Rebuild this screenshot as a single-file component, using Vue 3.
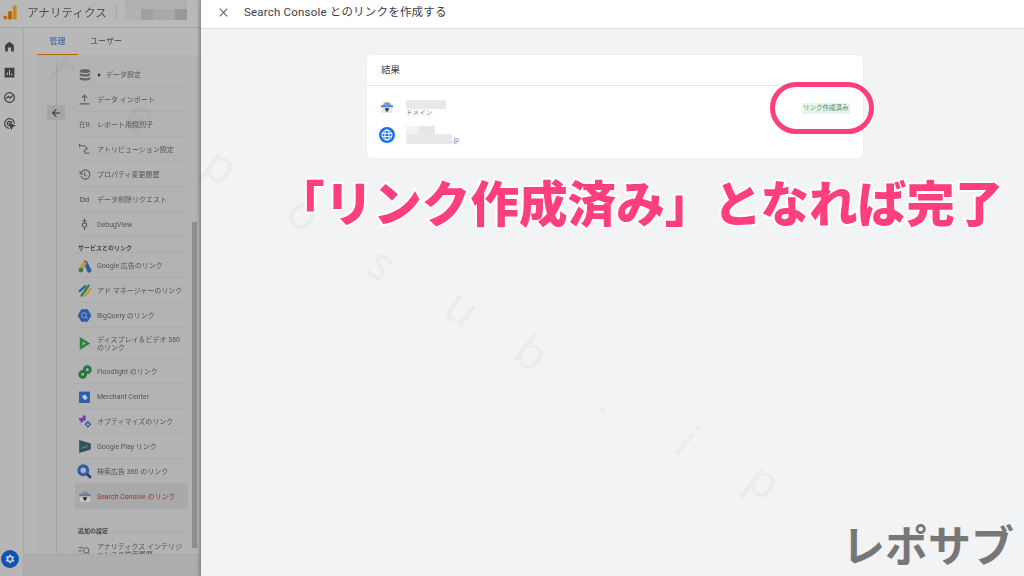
<script setup>
const topItems = [
  { id: 'data', label: 'データ設定', caret: true },
  { id: 'import', label: 'データ インポート' },
  { id: 'report', label: 'レポート用識別子' },
  { id: 'attr', label: 'アトリビューション設定' },
  { id: 'history', label: 'プロパティ変更履歴' },
  { id: 'delete', label: 'データ削除リクエスト' },
  { id: 'debug', label: 'DebugView' }
]

const linkItems = [
  { id: 'ads', label: 'Google 広告のリンク' },
  { id: 'manager', label: 'アド マネージャーのリンク' },
  { id: 'bigquery', label: 'BigQuery のリンク' },
  { id: 'display', label: 'ディスプレイ＆ビデオ 360 のリンク', tall: true },
  { id: 'floodlight', label: 'Floodlight のリンク' },
  { id: 'merchant', label: 'Merchant Center' },
  { id: 'optimize', label: 'オプティマイズのリンク' },
  { id: 'play', label: 'Google Play リンク' },
  { id: 'sa360', label: '検索広告 360 のリンク' },
  { id: 'console', label: 'Search Console のリンク', active: true }
]

const watermark = [
  { ch: 'r', x: 64, y: 68 },
  { ch: 'e', x: 142, y: 115 },
  { ch: 'p', x: 222, y: 165 },
  { ch: 'o', x: 305, y: 212 },
  { ch: 's', x: 383, y: 263 },
  { ch: 'u', x: 463, y: 307 },
  { ch: 'b', x: 532, y: 352 },
  { ch: '.', x: 612, y: 398 },
  { ch: 'i', x: 688, y: 440 },
  { ch: 'p', x: 765, y: 480 }
]
</script>

<template>
  <div class="screen">
    <aside class="ga">
      <header class="ga-head">
        <svg class="logo" viewBox="0 0 18 18" width="18" height="18">
          <rect x="12.5" y="0" width="5" height="18" rx="1.5" fill="#c98a12" />
          <rect x="6.5" y="7" width="5" height="11" rx="1.5" fill="#b5650f" />
          <circle cx="3" cy="15.5" r="2.5" fill="#b5650f" />
        </svg>
        <span class="ga-title">アナリティクス</span>
        <span class="ga-sep"></span>
        <span class="ga-account">
          <i class="mask-top"></i>
          <i class="mask-bottom"></i>
        </span>
      </header>

      <div class="ga-body">
        <nav class="rail">
          <svg viewBox="0 0 24 24" width="13" height="13"><path d="M12 3 4 9v12h5v-7h6v7h5V9z" fill="#3d4043" /></svg>
          <svg viewBox="0 0 24 24" width="13" height="13"><path d="M3 3h18v18H3zM7 12v5h2v-5zm4-5v10h2V7zm4 7v3h2v-3z" fill="#3d4043" fill-rule="evenodd" /></svg>
          <svg viewBox="0 0 24 24" width="13" height="13" fill="none" stroke="#3d4043" stroke-width="2.2"><circle cx="12" cy="12" r="9" /><path d="m6 14 4-4 3 3 5-5" /></svg>
          <svg viewBox="0 0 24 24" width="13" height="13" fill="none" stroke="#3d4043" stroke-width="2.2"><path d="M21 12a9 9 0 1 0-9 9" /><path d="M16 12a4 4 0 1 0-4 4" /><path d="m12 12 9 4-4 1.500-1.500 4z" fill="#3d4043" /></svg>
        </nav>

        <main class="admin">
          <div class="tabs">
            <span class="tab tab-on">管理</span>
            <span class="tab">ユーザー</span>
          </div>
          <div class="columns">
            <div class="gutter">
              <button class="back" type="button">
                <svg viewBox="0 0 24 24" width="12" height="12"><path d="M20 11H7.800l5.600-5.600L12 4l-8 8 8 8 1.400-1.400L7.800 13H20z" fill="#2f3133" /></svg>
              </button>
            </div>
            <div class="list">
              <div v-for="item in topItems" :key="item.id" class="row">
                <span class="row-icon">
                  <svg v-if="item.id === 'data'" viewBox="0 0 24 24" width="14" height="14" fill="#666"><ellipse cx="12" cy="5" rx="9" ry="3.500" /><path d="M3 8c2 3.500 16 3.500 18 0v4c-2 3.500-16 3.500-18 0zM3 15c2 3.500 16 3.500 18 0v4c-2 3.500-16 3.500-18 0z" /></svg>
                  <svg v-else-if="item.id === 'import'" viewBox="0 0 24 24" width="13" height="13" fill="none" stroke="#5c5c5c" stroke-width="2"><path d="M12 16V4M7 9l5-5 5 5M3 20h18" /></svg>
                  <span v-else-if="item.id === 'report'" class="glyph-small">在B</span>
                  <svg v-else-if="item.id === 'attr'" viewBox="0 0 24 24" width="13" height="13" fill="none" stroke="#5c5c5c" stroke-width="2"><path d="M3 5h9l5 5-6 5 3 4h7" /><path d="M3 2v6" /></svg>
                  <svg v-else-if="item.id === 'history'" viewBox="0 0 24 24" width="13" height="13" fill="none" stroke="#5c5c5c" stroke-width="2"><path d="M4 6v5h5" /><path d="M5 11a8.500 8.500 0 1 1 .5 4" /><path d="M12 8v5l3 2" /></svg>
                  <span v-else-if="item.id === 'delete'" class="glyph-dd">Dd</span>
                  <svg v-else viewBox="0 0 24 24" width="13" height="15" fill="none" stroke="#5c5c5c" stroke-width="2"><circle cx="12" cy="13" r="4" /><path d="M12 1v8M12 17v6M8 5h8" /></svg>
                </span>
                <span v-if="item.caret" class="caret"></span>
                <span class="row-label">{{ item.label }}</span>
              </div>

              <div class="section">サービスとのリンク</div>

              <div
                v-for="item in linkItems"
                :key="item.id"
                class="row"
                :class="{ 'row-tall': item.tall, 'row-active': item.active }"
              >
                <span class="row-icon">
                  <svg v-if="item.id === 'ads'" viewBox="0 0 24 24" width="14" height="14"><path d="M9 3h6l8 16a4 4 0 0 1-7 3z" fill="#2e5ea8" /><path d="M9 3 2 17l6 4 7-14z" fill="#c5982a" /><circle cx="5" cy="19" r="4" fill="#2c8344" /></svg>
                  <svg v-else-if="item.id === 'manager'" viewBox="0 0 24 24" width="14" height="14" fill="none" stroke-width="4" stroke-linecap="round"><path d="M3 12 12 4" stroke="#2e5ea8" /><path d="M6 20 18 3" stroke="#2c8344" /><path d="M12 20 21 9" stroke="#c5982a" /></svg>
                  <svg v-else-if="item.id === 'bigquery'" viewBox="0 0 24 24" width="15" height="15"><path d="M7 2h10l6 10-6 10H7L1 12z" fill="#2e5ea8" /><circle cx="11.500" cy="11.500" r="4" fill="none" stroke="#8aa4cc" stroke-width="1.500" /><path d="m14 14 3 3" stroke="#8aa4cc" stroke-width="1.500" /></svg>
                  <svg v-else-if="item.id === 'display'" viewBox="0 0 24 24" width="14" height="15"><path d="M3 1v22l18-11z" fill="#2c8344" /><path d="M8 9v6l5-3z" fill="#b5b5b5" /></svg>
                  <svg v-else-if="item.id === 'floodlight'" viewBox="0 0 24 24" width="14" height="14" fill="none" stroke="#23793d" stroke-width="5"><circle cx="16" cy="8" r="5" /><circle cx="8" cy="16" r="5" /></svg>
                  <svg v-else-if="item.id === 'merchant'" viewBox="0 0 24 24" width="13" height="14"><path d="M2 2h20v21H2z" fill="#2e5ea8" /><path d="m8 9 6-1 4 6-5 4-5-5z" fill="#b9c8e0" /></svg>
                  <svg v-else-if="item.id === 'optimize'" viewBox="0 0 24 24" width="14" height="14"><path d="M2 5h6V1h5v9H8v3H4V9H2z" fill="#7c3aa8" /><path d="m17 10 6 6-6 6-6-6z" fill="#2e5ea8" /><circle cx="17" cy="16" r="2" fill="#b5b5b5" /></svg>
                  <svg v-else-if="item.id === 'play'" viewBox="0 0 24 24" width="14" height="15"><path d="M2 1 22 7v10L2 23z" fill="#33505a" /><path d="m6 16 4-4 3 2 4-5" fill="none" stroke="#7f9aa3" stroke-width="1.500" /></svg>
                  <svg v-else-if="item.id === 'sa360'" viewBox="0 0 24 24" width="15" height="15" fill="none"><circle cx="10" cy="10" r="7" stroke="#2e5ea8" stroke-width="5" /><path d="m16 16 6 6" stroke="#1d3f78" stroke-width="4" /></svg>
                  <svg v-else viewBox="0 0 24 24" width="14" height="15"><path d="M5 9c0-8 14-8 14 0z" fill="#8c8c8c" /><path d="M2 8h20v4H2z" fill="#5f7dad" /><path d="M3 12h18v9H3z" fill="#c9c9c9" /><path d="M9 13h6v3l-3 4-3-4z" fill="#333" /></svg>
                </span>
                <span class="row-label">{{ item.label }}</span>
              </div>

              <div class="section section-extra">追加の設定</div>

              <div class="row row-last">
                <span class="row-icon">
                  <svg viewBox="0 0 24 24" width="15" height="13" fill="none" stroke="#5c5c5c" stroke-width="1.800"><path d="M1 5h8M1 11h6M1 17h8" /><circle cx="15" cy="10" r="5" /><path d="m19 14 4 5" /></svg>
                </span>
                <span class="row-label">アナリティクス インテリジェンスの検索履歴</span>
              </div>
            </div>
            <div class="scroll-track"><span class="scroll-thumb"></span></div>
          </div>
          <div class="admin-foot"></div>
        </main>
      </div>

      <span class="gear">
        <svg viewBox="0 0 24 24" width="12" height="12"><path fill="#c8cdd6" fill-rule="evenodd" d="M19.400 13a7.500 7.500 0 0 0 0-2l2.100-1.600-2-3.500-2.500 1a7.500 7.500 0 0 0-1.700-1L15.400 3.300h-4l-.4 2.600a7.500 7.500 0 0 0-1.700 1l-2.500-1-2 3.500L6.900 11a7.500 7.500 0 0 0 0 2l-2.100 1.600 2 3.500 2.500-1a7.500 7.500 0 0 0 1.700 1l.4 2.600h4l.4-2.600a7.500 7.500 0 0 0 1.700-1l2.500 1 2-3.500zM13.400 15.500a3.500 3.500 0 1 1 0-7 3.500 3.500 0 0 1 0 7z" transform="translate(-1.200 0)" /></svg>
      </span>
    </aside>

    <section class="panel">
      <header class="panel-head">
        <svg viewBox="0 0 24 24" width="13" height="13"><path d="M5 5l14 14M19 5 5 19" stroke="#5f6368" stroke-width="2" fill="none" /></svg>
        <h1>Search Console とのリンクを作成する</h1>
      </header>

      <div class="panel-body">
        <div class="card">
          <div class="card-title">結果</div>
          <div class="card-rows">
            <div class="result">
              <svg class="console-icon" viewBox="0 0 24 24" width="14" height="15"><path d="M5 8c0-7 14-7 14 0z" fill="#9aa0a6" /><path d="M2 8h20v4H2z" fill="#4285f4" /><path d="M3 12h18v9H3z" fill="#e3e5e8" /><path d="M9 13h6v3l-3 4-3-4z" fill="#3c4043" /></svg>
              <div class="result-text">
                <span class="mask mask-domain"></span>
                <span class="result-sub">ドメイン</span>
              </div>
              <span class="badge">リンク作成済み</span>
            </div>
            <div class="result result-site">
              <svg viewBox="0 0 24 24" width="16" height="16">
                <circle cx="12" cy="12" r="12" fill="#1a73e8" />
                <g fill="none" stroke="#fff" stroke-width="1.500">
                  <circle cx="12" cy="12" r="7.500" />
                  <ellipse cx="12" cy="12" rx="3.200" ry="7.500" />
                  <path d="M4.500 9.500h15M4.500 14.500h15" />
                </g>
              </svg>
              <div class="result-text site-text">
                <span class="mask mask-site-top"></span>
                <span class="site-line"><span class="mask mask-site"></span><span class="tld">.jp</span></span>
              </div>
            </div>
          </div>
        </div>
      </div>
    </section>

    <div class="watermark">
      <span
        v-for="(m, i) in watermark"
        :key="i"
        class="mark"
        :style="{ left: m.x + 'px', top: m.y + 'px' }"
      >{{ m.ch }}</span>
    </div>

    <span class="ring"></span>
    <div class="caption">「リンク作成済み」となれば完了</div>
    <div class="brand">レポサブ</div>
  </div>
</template>

<style>
html, body {
  margin: 0;
  background: #f1f3f5;
}
</style>

<style scoped>
.screen {
  position: relative;
  display: flex;
  width: 1024px;
  height: 576px;
  overflow: hidden;
  font-family: Roboto, "Noto Sans CJK JP", sans-serif;
  color: #3c3c3c;
}

/* dimmed page behind the side sheet */
.ga {
  position: relative;
  flex: 0 0 201px;
  display: flex;
  flex-direction: column;
  height: 576px;
  background: #b6b6b6;
  overflow: hidden;
  filter: blur(0.35px);
}
.ga-head {
  flex: 0 0 28px;
  display: flex;
  align-items: center;
  padding: 0 0 3px 3px;
  background: #b9b9b9;
  border-bottom: 1px solid #a8a8a8;
  box-sizing: border-box;
  overflow: hidden;
}
.logo {
  flex: none;
  width: 14px;
  height: 15px;
}
.ga-title {
  margin-left: 10px;
  font-size: 11.500px;
  letter-spacing: 0.100px;
  white-space: nowrap;
  color: #505050;
}
.ga-sep {
  flex: none;
  width: 1px;
  height: 17px;
  margin-left: 9px;
  background: #a6a6a6;
}
.ga-account {
  flex: none;
  display: flex;
  flex-direction: column;
  width: 62px;
  height: 24px;
  margin-left: 8px;
  margin-top: -1px;
}
.mask-top {
  height: 9px;
  background: #b0b0b0;
}
.mask-bottom {
  height: 11px;
  background: linear-gradient(90deg, #b2b2b2 0 25%, #9f9f9f 25% 45%, #a9a9a9 45% 80%, #989898 80%);
}
.ga-body {
  flex: 1;
  display: flex;
  min-height: 0;
}
.rail {
  flex: 0 0 24px;
  display: flex;
  flex-direction: column;
  align-items: center;
  gap: 12.500px;
  padding-top: 12px;
  padding-right: 5px;
  box-sizing: border-box;
  border-right: 1px solid #a9a9a9;
}
.admin {
  flex: 1;
  display: flex;
  flex-direction: column;
  min-width: 0;
}
.tabs {
  flex: 0 0 27px;
  display: flex;
  padding-left: 13px;
  background: #b8b8b8;
}
.tab {
  width: 41px;
  height: 27px;
  line-height: 28px;
  text-align: center;
  font-size: 8px;
  font-weight: 500;
  color: #5b5b5b;
  box-sizing: border-box;
}
.tab + .tab {
  width: 42px;
  margin-left: 7px;
}
.tab-on {
  color: #45689f;
  border-bottom: 1px solid #b5690f;
}
.columns {
  flex: 1;
  display: flex;
  min-height: 0;
  margin-left: 13px;
  background: #b3b3b3;
}
.gutter {
  flex: 0 0 19px;
  min-width: 0;
  border-right: 1px solid #a4a4a4;
  margin-top: 8px;
  padding-top: 42px;
}
.back {
  display: flex;
  align-items: center;
  justify-content: center;
  width: 18px;
  height: 15px;
  margin-left: 10px;
  padding: 0;
  border: 0;
  border-radius: 1px;
  background: #a5a5a5;
}
.list {
  flex: 0 0 113px;
  margin-left: 18px;
  padding-top: 7px;
  overflow: hidden;
}
.row {
  display: flex;
  align-items: center;
  height: 25px;
  padding-top: 1px;
  box-sizing: border-box;
  border-bottom: 1px solid #acacac;
  font-size: 7px;
  line-height: 8px;
  color: #555;
}
.row-tall {
  height: 31px;
}
.row-last {
  height: 35px;
  border-bottom: 0;
}
.row-active {
  background: #a9a9a9;
  color: #8f3535;
  border-bottom-color: transparent;
}
.row-icon {
  flex: 0 0 19px;
  display: flex;
  justify-content: center;
  align-items: center;
  margin-right: 3px;
}
.caret {
  width: 0;
  height: 0;
  margin: 0 5px 0 1px;
  border-left: 3px solid #333;
  border-top: 2.500px solid transparent;
  border-bottom: 2.500px solid transparent;
}
.row-label {
  flex: 1;
  padding-right: 2px;
  line-break: loose;
}
.glyph-small {
  font-size: 6.500px;
  color: #5c5c5c;
}
.glyph-dd {
  font-size: 8px;
  font-weight: 500;
  color: #5c5c5c;
}
.section {
  height: 16px;
  box-sizing: border-box;
  padding: 7px 0 0 3px;
  line-height: 8px;
  font-size: 6px;
  font-weight: 700;
  color: #444;
  border-bottom: 1px solid #acacac;
}
.section-extra {
  height: 24px;
  padding-top: 18px;
}
.scroll-track {
  flex: 0 0 9px;
  margin-left: 3px;
  position: relative;
}
.scroll-thumb {
  position: absolute;
  top: 167px;
  left: 1px;
  width: 5px;
  height: 326px;
  background: #8e8e8e;
}
.admin-foot {
  flex: 0 0 21px;
  background: #adadad;
  border-top: 1px solid #a9a9a9;
}
.gear {
  position: absolute;
  left: 1px;
  bottom: 8px;
  display: flex;
  align-items: center;
  justify-content: center;
  width: 18px;
  height: 18px;
  border-radius: 50%;
  background: #0f55b0;
}

/* side sheet */
.panel {
  flex: 1;
  display: flex;
  flex-direction: column;
  background: #f1f3f5;
  box-shadow: -2px 0 3px rgba(0, 0, 0, 0.25);
  position: relative;
}
.panel-head {
  flex: 0 0 29px;
  display: flex;
  align-items: center;
  gap: 14px;
  padding: 0 0 6px 16px;
  background: #fff;
  border-bottom: 1px solid #e0e0e0;
  box-sizing: border-box;
}
.panel-head svg {
  margin-top: 2px;
}
.panel-head h1 {
  margin: 0;
  font-size: 11.500px;
  font-weight: 400;
  letter-spacing: 0.200px;
  color: #3c4043;
}
.panel-body {
  flex: 1;
  padding: 26px 0 0 166px;
}
.card {
  width: 496px;
  height: 103px;
  background: #fff;
  border-radius: 4px;
  box-shadow: 0 0 1px rgba(60, 64, 67, 0.2);
}
.card-title {
  height: 31px;
  line-height: 30px;
  padding-left: 14px;
  font-size: 9.500px;
  color: #3c4043;
  border-bottom: 1px solid #e4e6e8;
  box-sizing: border-box;
}
.card-rows {
  padding: 10px 13px 0 13px;
}
.result {
  display: flex;
  align-items: center;
  gap: 12px;
  height: 25px;
}
.console-icon {
  margin-top: -2px;
}
.result-site {
  height: 24px;
  margin: 2px 0 0 -1px;
  gap: 11px;
}
.result-text {
  display: flex;
  flex-direction: column;
  flex: 1;
}
.mask {
  display: block;
  background: #e8e9ea;
}
.mask-domain {
  width: 40px;
  height: 9px;
}
.result-sub {
  font-size: 6.500px;
  line-height: 8px;
  color: #80868b;
}
.mask-site-top {
  width: 29px;
  height: 8px;
  background: linear-gradient(90deg, #f3f3f4 0 40%, #e6e7e8 40%);
}
.site-line {
  display: flex;
  align-items: flex-end;
}
.mask-site {
  width: 46px;
  height: 10px;
}
.tld {
  font-size: 6.500px;
  line-height: 8px;
  color: #80868b;
}
.badge {
  margin-top: -1px;
  padding: 0 1.500px;
  height: 11px;
  line-height: 11px;
  font-size: 6.500px;
  color: #4d8a62;
  background: #e6f4ea;
}

/* faint watermark over everything */
.watermark {
  position: absolute;
  inset: 0;
  pointer-events: none;
}
.mark {
  position: absolute;
  font-family: "Noto Sans", sans-serif;
  font-size: 48px;
  line-height: 50px;
  font-weight: 500;
  color: rgba(40, 40, 40, 0.035);
  transform: translate(-50%, -50%) rotate(38deg);
}

/* annotations drawn on top of the screenshot */
.ring {
  position: absolute;
  left: 770px;
  top: 82px;
  width: 104px;
  height: 52px;
  box-sizing: border-box;
  border: 5px solid #fd3f7d;
  border-radius: 26px;
  box-shadow: 0 0 0 1.500px #fff, inset 0 0 0 1px #fff;
}
.caption {
  position: absolute;
  left: 276px;
  top: 166px;
  font-family: "Noto Sans CJK JP", sans-serif;
  font-size: 48.600px;
  font-weight: 900;
  line-height: 70px;
  white-space: nowrap;
  color: #fd3f7d;
  -webkit-text-stroke: 4px #fff;
  paint-order: stroke fill;
}
.brand {
  position: absolute;
  right: 10px;
  bottom: 3px;
  font-family: "Noto Sans CJK JP", sans-serif;
  font-size: 43px;
  font-weight: 700;
  line-height: 60px;
  color: #777;
}
</style>
